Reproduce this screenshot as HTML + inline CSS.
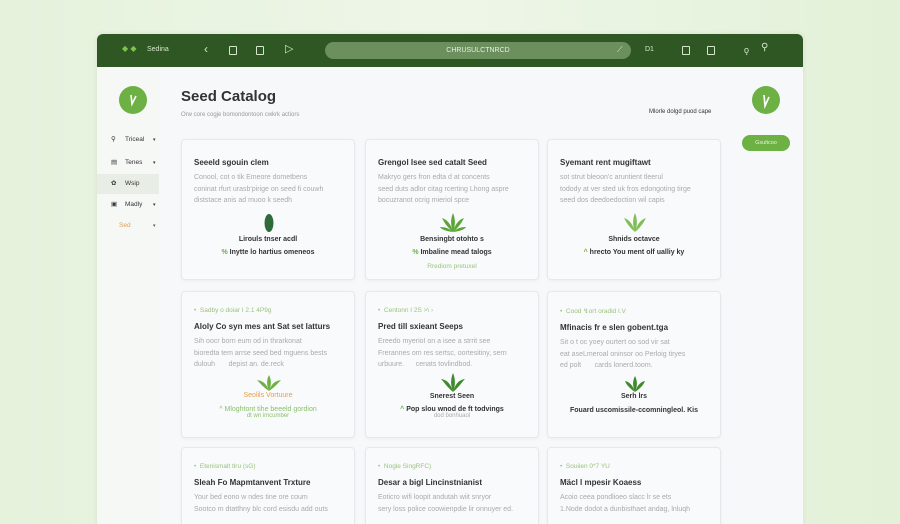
<!DOCTYPE html>
<html><head><meta charset="utf-8"><style>
*{margin:0;padding:0;box-sizing:border-box}
body{width:900px;height:514px;overflow:hidden;background:linear-gradient(90deg,#e6f2dc,#eef6e8 50%,#e3f1d8);font-family:"Liberation Sans",sans-serif;position:relative}
.win{position:absolute;left:97px;top:34px;width:706px;height:490px;background:#f7f8fa;border-radius:6px 6px 0 0;overflow:hidden;box-shadow:0 0 6px rgba(0,0,0,.08)}
.bar{position:absolute;left:0;top:0;width:706px;height:33px;background:#2e5723}
.bar *{position:absolute;color:#d6e6cc;font-size:8px}
.url{left:228px;top:8px;width:306px;height:17px;border-radius:9px;background:#6c8f5e;text-align:center;line-height:17px;color:#e8f0e2;font-size:7px}
.sq{width:8px;height:9px;border:1.2px solid #d6e6cc;border-radius:1px}
.side{position:absolute;left:0;top:33px;width:62px;height:460px;background:#f6f8f6}
.nav{position:absolute;left:0;width:62px;height:20px;font-size:6.5px;color:#333;line-height:20px}
.nav b{position:absolute;left:14px;font-weight:normal}
.nav i{position:absolute;left:28px;font-style:normal}
.nav s{position:absolute;left:56px;text-decoration:none;font-size:5px}
.circ{position:absolute;width:28px;height:28px;border-radius:50%;background:#6db043}
.card{position:absolute;background:#f9fafc;border:1px solid #e6e9ec;border-radius:4px;box-shadow:0 1px 3px rgba(0,0,0,.04);padding:0 12px}
.t{font-size:8px;font-weight:bold;color:#333;margin-top:0}
.d{font-size:7px;color:#aaa;line-height:11.5px}
.tag{font-size:6.5px;color:#9bc27e;margin-bottom:8px}
.c{text-align:center;font-size:7px;font-weight:bold;color:#333}
h1{position:absolute;left:84px;top:54px;font-size:15px;color:#333}
</style></head><body>
<div class="win">
 <div class="bar">
  <span style="left:25px;top:10px;color:#7fc450;font-size:8px">◆ ◆</span>
  <span style="left:50px;top:12px;font-size:7px">Sedina</span>
  <span style="left:107px;top:8px;font-size:12px">‹</span>
  <div class="sq" style="left:132px;top:12px"></div>
  <div class="sq" style="left:159px;top:12px"></div>
  <span style="left:188px;top:8px;font-size:11px">▷</span>
  <div class="url">CHRUSULCTNRCD</div>
  <span style="left:520px;top:11px;font-size:8px">⟋</span>
  <span style="left:548px;top:12px;font-size:7px">D1</span>
  <div class="sq" style="left:585px;top:12px"></div>
  <div class="sq" style="left:610px;top:12px"></div>
  <span style="left:647px;top:11px;font-size:9px">ǫ</span>
  <span style="left:664px;top:8px;font-size:10px">⚲</span>
 </div>
 <div class="side">
  <div class="circ" style="left:22px;top:19px"><svg width="28" height="28"><path d="M12 9 L13 18 L17 10" stroke="#fff" stroke-width="1.6" fill="none"/></svg></div>
  <div class="nav" style="top:63px"><b>⚲</b><i>Triceal</i><s>▾</s></div>
  <div class="nav" style="top:86px"><b>▤</b><i>Tenes</i><s>▾</s></div>
  <div class="nav" style="top:107px;background:#e8ede6"><b>✿</b><i>Wsip</i></div>
  <div class="nav" style="top:128px"><b>▣</b><i>Madly</i><s>▾</s></div>
  <div class="nav" style="top:149px;color:#e0a050"><i style="left:22px">Sed</i><s style="color:#555">▾</s></div>
 </div>
 <h1>Seed Catalog</h1>
 <div style="position:absolute;left:84px;top:78px;font-size:6px;color:#999">Orw core cogje bomondontoon cwkrk actiors</div>
 <div style="position:absolute;left:552px;top:75px;font-size:6px;color:#333">Mlorle dolgd puod cape</div>
 <div class="circ" style="left:655px;top:52px"><svg width="28" height="28"><path d="M12 9 L13 20 L17 11" stroke="#fff" stroke-width="1.6" fill="none"/></svg></div>
 <div style="position:absolute;left:645px;top:101px;width:48px;height:16px;border-radius:8px;background:#6db043;color:#eaf5e0;font-size:5.5px;text-align:center;line-height:16px">Gsultcoo</div>

 <div class="card" style="left:84px;top:105px;width:174px;height:141px">
  <div class="t" style="margin-top:18px">Seeeld sgouin clem</div>
  <div class="d" style="margin-top:5px">Conool, cot o tik Emeore dometbens<br>coninat rfurt urasb'pirige on seed fi couwh<br>diststace anis ad muoo k seedh</div>
  <svg width="150" height="22" style="display:block;margin:5px auto 0"><ellipse cx="75" cy="11" rx="4.5" ry="9" fill="#2e6a3a"/></svg>
  <div class="c" style="margin-top:2px">Lirouls tnser acdl</div>
  <div class="c" style="margin-top:6px"><span style="color:#6db043">%</span> Inytte lo hartius omeneos</div>
 </div>
 <div class="card" style="left:268px;top:105px;width:174px;height:141px">
  <div class="t" style="margin-top:18px">Grengol Isee sed catalt Seed</div>
  <div class="d" style="margin-top:5px">Makryo gers fron edta d at concents<br>seed duts adlor citag rcerting Lhong aspre<br>bocuzranot ocrig mieriol spce</div>
  <svg width="150" height="22" style="display:block;margin:5px auto 0"><g fill="#5aa635" transform="translate(75,20)"><path d="M0 0 C-3 -8 -2 -14 0 -19 C2 -14 3 -8 0 0Z"/><path d="M0 0 C-6 -5 -9 -10 -11 -14 C-5 -12 -2 -7 0 0Z"/><path d="M0 0 C6 -5 9 -10 11 -14 C5 -12 2 -7 0 0Z"/><path d="M0 0 C-8 -1 -12 -3 -13 -5 C-7 -5 -3 -3 0 0Z"/><path d="M0 0 C8 -1 12 -3 13 -5 C7 -5 3 -3 0 0Z"/></g></svg>
  <div class="c" style="margin-top:2px">Bensingbt otohto s</div>
  <div class="c" style="margin-top:6px"><span style="color:#6db043">%</span> Imbaline mead talogs</div>
  <div class="c" style="margin-top:7px;color:#9bc27e;font-weight:normal;font-size:6.5px">Rrediom pretuxel</div>
 </div>
 <div class="card" style="left:450px;top:105px;width:174px;height:141px">
  <div class="t" style="margin-top:18px">Syemant rent mugiftawt</div>
  <div class="d" style="margin-top:5px">sot strut bleoon'c aruntient tleerul<br>todody at ver sted uk fros edongoting tirge<br>seed dos deedoedoction wil capis</div>
  <svg width="150" height="22" style="display:block;margin:5px auto 0"><g fill="#7fbf55" transform="translate(75,20)"><path d="M0 0 C-3 -8 -2 -14 0 -19 C2 -14 3 -8 0 0Z"/><path d="M0 0 C-6 -5 -9 -10 -11 -14 C-5 -12 -2 -7 0 0Z"/><path d="M0 0 C6 -5 9 -10 11 -14 C5 -12 2 -7 0 0Z"/></g></svg>
  <div class="c" style="margin-top:2px">Shnids octavce</div>
  <div class="c" style="margin-top:6px"><span style="color:#6db043">^</span> hrecto You ment olf ualliy ky</div>
 </div>

 <div class="card" style="left:84px;top:257px;width:174px;height:147px">
  <div class="tag" style="margin-top:15px">• &nbsp;Sadby o doiar I 2.1 4P9g</div>
  <div class="t">Aloly Co syn mes ant Sat set latturs</div>
  <div class="d" style="margin-top:5px">Sih oocr born eum od in thrarkonat<br>bioredta tem arrse seed bed mguens bests<br>dulouh &nbsp;&nbsp;&nbsp;&nbsp;&nbsp;&nbsp;depist an. de.reck</div>
  <svg width="150" height="18" style="display:block;margin:3px auto 0"><g fill="#6db043" transform="translate(75,17)"><path d="M0 0 C-3 -7 -2 -12 0 -16 C2 -12 3 -7 0 0Z"/><path d="M0 0 C-6 -4 -9 -8 -12 -11 C-5 -10 -2 -6 0 0Z"/><path d="M0 0 C6 -4 9 -8 12 -11 C5 -10 2 -6 0 0Z"/></g></svg>
  <div class="c" style="color:#e0a050;font-weight:normal">Seolils Vortuure</div>
  <div class="c" style="margin-top:7px;color:#8cc06a;font-weight:normal">^ Mloghtont tihe beeeld gordion</div>
  <div class="c" style="font-size:6px;color:#8cc06a;font-weight:normal">dt wn imcumber</div>
 </div>
 <div class="card" style="left:268px;top:257px;width:174px;height:147px">
  <div class="tag" style="margin-top:15px">• &nbsp;Centonn I 2S &gt;\ ›</div>
  <div class="t">Pred till sxieant Seeps</div>
  <div class="d" style="margin-top:5px">Ereedo myerioI on a isee a strrit see<br>Frerannes om res sertsc, oortesitiny, sern<br>urbuure. &nbsp;&nbsp;&nbsp;&nbsp;&nbsp;cenats tovlindbod.</div>
  <svg width="150" height="20" style="display:block;margin:2px auto 0"><g fill="#3f8a2c" transform="translate(75,19)"><path d="M0 0 C-3 -8 -2 -14 0 -19 C2 -14 3 -8 0 0Z"/><path d="M0 0 C-6 -5 -9 -10 -12 -13 C-5 -12 -2 -7 0 0Z"/><path d="M0 0 C6 -5 9 -10 12 -13 C5 -12 2 -7 0 0Z"/></g></svg>
  <div class="c">Snerest Seen</div>
  <div class="c" style="margin-top:6px"><span style="color:#6db043">^</span> Pop slou wnod de ft todvings</div>
  <div class="c" style="font-size:6px;color:#aaa;font-weight:normal">dod bonhuaol</div>
 </div>
 <div class="card" style="left:450px;top:257px;width:174px;height:147px">
  <div class="tag" style="margin-top:15px">• &nbsp;Cood ↯ort oradid I.V</div>
  <div class="t">Mfinacis fr e slen gobent.tga</div>
  <div class="d" style="margin-top:5px">Sit o t oc yoey ourtert oo sod vir sat<br>eat aseLmeroal oninsor oo Perloig tiryes<br>ed polt &nbsp;&nbsp;&nbsp;&nbsp;&nbsp;&nbsp;cards lonerd.toom.</div>
  <svg width="150" height="18" style="display:block;margin:3px auto 0"><g fill="#3f8a2c" transform="translate(75,17)"><path d="M0 0 C-3 -7 -2 -12 0 -16 C2 -12 3 -7 0 0Z"/><path d="M0 0 C-6 -4 -9 -8 -10 -11 C-5 -10 -2 -6 0 0Z"/><path d="M0 0 C6 -4 9 -8 10 -11 C5 -10 2 -6 0 0Z"/></g></svg>
  <div class="c">Serh lrs</div>
  <div class="c" style="margin-top:7px">Fouard uscomissile-ccomningleol. Kis</div>
 </div>

 <div class="card" style="left:84px;top:413px;width:174px;height:100px">
  <div class="tag" style="margin-top:15px">• &nbsp;Etenismalt tlru (sG)</div>
  <div class="t">Sleah Fo Mapmtanvent Trxture</div>
  <div class="d" style="margin-top:5px">Your bed eono w ndes tine ore coum<br>Sootco m dtatthny blc cord esisdu add outs</div>
 </div>
 <div class="card" style="left:268px;top:413px;width:174px;height:100px">
  <div class="tag" style="margin-top:15px">• &nbsp;Nogle SingRFC)</div>
  <div class="t">Desar a bigl Lincinstnianist</div>
  <div class="d" style="margin-top:5px">Eoticro wifi loopit andutah wiit snryor<br>sery loss police coowienpdie lir onnuyer ed.</div>
 </div>
 <div class="card" style="left:450px;top:413px;width:174px;height:100px">
  <div class="tag" style="margin-top:15px">• &nbsp;Souiien 0*7 YU</div>
  <div class="t">Mäcl l mpesir Koaess</div>
  <div class="d" style="margin-top:5px">Acoio ceea pondlioeo slacc lr se ets<br>1.Node dodot a dunbisthaet andag, lnluqh</div>
 </div>
</div>
</body></html>
